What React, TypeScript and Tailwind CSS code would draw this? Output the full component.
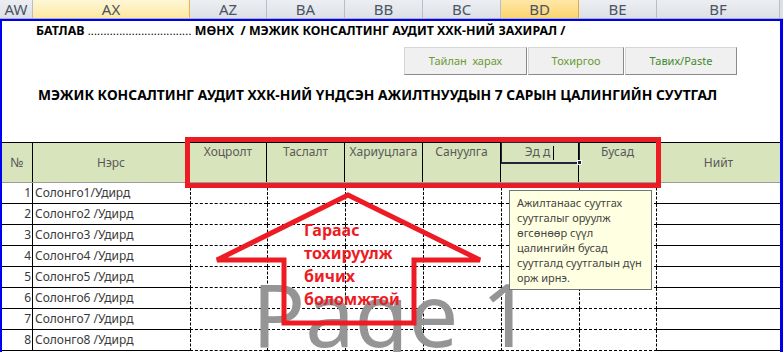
import React from "react";

const rows = [
  "Солонго1/Удирд",
  "Солонго2 /Удирд",
  "Солонго3 /Удирд",
  "Солонго4 /Удирд",
  "Солонго5 /Удирд",
  "Солонго6 /Удирд",
  "Солонго7 /Удирд",
  "Солонго8 /Удирд",
];

function ColHead({ label, w, sel }: { label: string; w: string; sel?: "light" | "strong" }) {
  const base =
    "h-full flex items-center justify-center text-[15px] leading-none border-r shrink-0 ";
  const look =
    sel === "light"
      ? "bg-gradient-to-b from-[#fef7d6] to-[#fde9a0] border-r-[#e8b64a] text-[#4a5464]"
      : sel === "strong"
      ? "bg-gradient-to-b from-[#fee8a6] to-[#fbd46e] border-r-[#e2a93c] text-[#4a5464]"
      : "bg-gradient-to-b from-[#eceef2] to-[#dde1e6] border-r-[#b8bfc8] text-[#4a5464]";
  return <div className={base + look + " " + w}>{label}</div>;
}

export default function App() {
  return (
    <div className="relative w-[783px] h-[352px] overflow-hidden bg-white font-['Noto_Sans',sans-serif]">
      {/* column letters */}
      <div className="flex h-[19px] border-b border-b-[#a9b0ba]">
        <ColHead label="AW" w="w-[33px]" />
        <ColHead label="AX" w="w-[157px]" sel="light" />
        <ColHead label="AZ" w="w-[77px]" />
        <ColHead label="BA" w="w-[78px]" />
        <ColHead label="BB" w="w-[78px]" />
        <ColHead label="BC" w="w-[78px]" />
        <ColHead label="BD" w="w-[78px]" sel="strong" />
        <ColHead label="BE" w="w-[78px]" />
        <ColHead label="BF" w="w-[123px]" />
        <div className="h-full flex-1 bg-[#dde1e6]" />
      </div>

      {/* page */}
      <div className="border-l-2 border-t-2 border-r-[3px] border-[#0000f0] h-[333px]">
        <div className="h-[20px] pl-[34px] flex items-center whitespace-pre text-[12.4px] font-bold text-black">
          <span>БАТЛАВ </span>
          <span className="font-normal text-[11px] tracking-[0.2px]">.................................</span>
          <span> МӨНХ  / МЭЖИК КОНСАЛТИНГ АУДИТ ХХК-НИЙ ЗАХИРАЛ /</span>
        </div>
        <div className="h-[40px] pt-[6px] pl-[402px] flex gap-[1px]">
          <div className="w-[123px] h-[28px] flex items-center justify-center bg-[#f0f0f0] border border-[#d6d6d6] border-r-[#8a8a8a] border-b-[#8a8a8a] text-[11px] text-[#6a9a32] whitespace-pre">
            Тайлан  харах
          </div>
          <div className="w-[96px] h-[28px] flex items-center justify-center bg-[#f0f0f0] border border-[#d6d6d6] border-r-[#8a8a8a] border-b-[#8a8a8a] text-[11px] text-[#6a9a32]">
            Тохиргоо
          </div>
          <div className="w-[112px] h-[28px] flex items-center justify-center bg-[#f0f0f0] border border-[#d6d6d6] border-r-[#8a8a8a] border-b-[#8a8a8a] text-[11px] text-[#3f8a2a]">
            Тавих/Paste
          </div>
        </div>
        <div className="h-[28px] pl-[36px] flex items-center text-[13.8px] font-bold text-black whitespace-nowrap">
          МЭЖИК КОНСАЛТИНГ АУДИТ ХХК-НИЙ ҮНДСЭН АЖИЛТНУУДЫН 7 САРЫН ЦАЛИНГИЙН СУУТГАЛ
        </div>
        <div className="h-[33px]" />

        {/* table header */}
        <div className="grid grid-cols-[31px_157px_77px_78px_78px_78px_78px_78px_123px] h-[41px] border-t border-t-black border-b border-b-[#9c9c9c] bg-[#d8e4bc] text-[12px] text-[#595959]">
          <div className="flex items-center justify-center border-r border-black text-[13px]">№</div>
          <div className="flex items-center justify-center border-r border-black">Нэрс</div>
          <div className="text-center pt-[1px] leading-[16px] border-r border-black">Хоцролт</div>
          <div className="text-center pt-[1px] leading-[16px] border-r border-black">Таслалт</div>
          <div className="text-center pt-[1px] leading-[16px] border-r border-black">Хариуцлага</div>
          <div className="text-center pt-[1px] leading-[16px] border-r border-black">Сануулга</div>
          <div className="relative text-center pt-[1px] leading-[16px] border-r border-black">
            <div className="absolute left-0 top-[-1px] w-[79px] h-[22px] border border-[#24243c] border-b-2" />
            <div className="absolute left-[76px] top-[17px] w-[5px] h-[5px] bg-[#24243c] border border-white" />
            <span>Эд д</span>
            <span className="inline-block w-px h-[14px] bg-black align-middle ml-[3px]" />
          </div>
          <div className="text-center pt-[1px] leading-[16px] border-r border-black">Бусад</div>
          <div className="flex items-center justify-center">Нийт</div>
        </div>

        {/* body rows */}
        {rows.map((name, i) => (
          <div
            key={i}
            className="grid grid-cols-[31px_157px_77px_78px_78px_78px_78px_78px_123px] h-[21px] text-[12px] text-[#3a3a3a]"
          >
            <div className="flex items-center justify-end pr-[1px] border-r border-b border-black">{i + 1}</div>
            <div className="flex items-center pl-[2px] border-b border-black whitespace-pre">{name}</div>
            <div className="border-l border-b border-dashed border-black" />
            <div className="border-l border-b border-dashed border-black" />
            <div className="border-l border-b border-dashed border-black" />
            <div className="border-l border-b border-dashed border-black" />
            <div className="border-l border-b border-dashed border-black" />
            <div className="border-x border-b border-dashed border-black" />
            <div className="border-b border-black" />
          </div>
        ))}
      </div>

      {/* Page 1 watermark */}
      <div className="absolute left-[252px] top-[269px] text-[88px] leading-none text-[#959595] whitespace-pre pointer-events-none">
        Page 1
      </div>

      {/* tooltip */}
      <div className="absolute left-[509px] top-[190px] w-[143px] h-[100px] bg-[#ffffe1] border border-[#767676] pl-[7px] pt-[4px] text-[11px] leading-[15px] text-[#444444]">
        <div>Ажилтанаас суутгах</div>
        <div>суутгалыг оруулж</div>
        <div>өгсөнөөр сүүл</div>
        <div>цалингийн бусад</div>
        <div>суутгалд суутгалын дүн</div>
        <div>орж ирнэ.</div>
      </div>

      {/* red highlight rectangle */}
      <div className="absolute left-[185px] top-[137px] w-[476px] h-[51px] border-[5px] border-[#ed1c24]" />

      {/* red arrow */}
      <svg className="absolute left-0 top-0" width="783" height="352" viewBox="0 0 783 352">
        <polygon
          points="348,195 480,260 414,260 414,323 284,323 284,260 217,260"
          fill="none"
          stroke="#ed1c24"
          strokeWidth="5"
          strokeLinejoin="miter"
        />
      </svg>
      <div className="absolute left-[304px] top-[219px] text-[16px] leading-[23px] font-bold text-[#ed1c24]">
        <div>Гараас</div>
        <div>тохируулж</div>
        <div>бичих</div>
        <div>боломжтой</div>
      </div>
    </div>
  );
}
